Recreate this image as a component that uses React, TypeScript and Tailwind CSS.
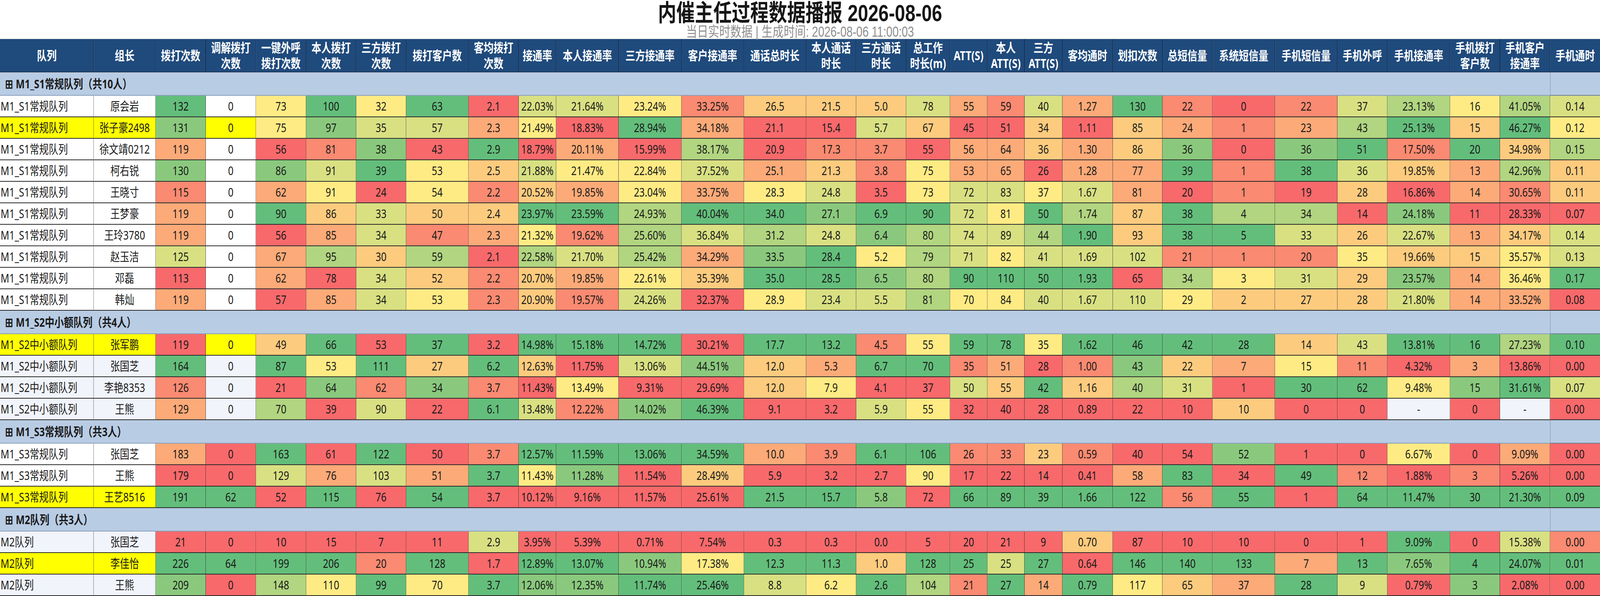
import React, { useState } from "react";

type Row = { q: string; n: string; v: string; c: string; hl?: boolean };
type Group = { label: string; tint: boolean; rows: Row[] };

const colWidths = [
  "w-[305px]", "w-[201px]", "w-[163px]", "w-[163px]", "w-[163px]", "w-[163px]", "w-[162px]",
  "w-[203px]", "w-[163px]", "w-[122px]", "w-[203px]", "w-[204px]", "w-[203px]", "w-[202px]",
  "w-[163px]", "w-[162px]", "w-[143px]", "w-[121px]", "w-[121px]", "w-[123px]", "w-[164px]",
  "w-[161px]", "w-[163px]", "w-[203px]", "w-[203px]", "w-[162px]", "w-[204px]", "w-[162px]",
  "w-[163px]", "w-[162px]",
];

const headers = [
  "队列", "组长", "拨打次数", "调解拨打|次数", "一键外呼|拨打次数", "本人拨打|次数", "三方拨打|次数",
  "拨打客户数", "客均拨打|次数", "接通率", "本人接通率", "三方接通率", "客户接通率", "通话总时长",
  "本人通话|时长", "三方通话|时长", "总工作|时长(m)", "ATT(S)", "本人|ATT(S)", "三方|ATT(S)",
  "客均通时", "划扣次数", "总短信量", "系统短信量", "手机短信量", "手机外呼", "手机接通率",
  "手机拨打|客户数", "手机客户|接通率", "手机通时",
];

const groups: Group[] = [
  {
    label: "M1_S1常规队列（共10人）",
    tint: false,
    rows: [
      { q: "M1_S1常规队列", n: "原会岩", v: "132 0 73 100 32 63 2.1 22.03% 21.64% 23.24% 33.25% 26.5 21.5 5.0 78 55 59 40 1.27 130 22 0 22 37 23.13% 16 41.05% 0.14", c: "8 W 4 8 4 8 0 5 5 4 1 3 3 3 5 2 1 5 2 8 1 0 1 5 6 4 6 5" },
      { q: "M1_S1常规队列", n: "张子豪2498", hl: true, v: "131 0 75 97 35 57 2.3 21.49% 18.83% 28.94% 34.18% 21.1 15.4 5.7 67 45 51 34 1.11 85 24 1 23 43 25.13% 15 46.27% 0.12", c: "7 X 4 7 5 5 2 4 0 8 2 0 0 5 3 0 0 3 0 3 2 1 2 6 8 3 8 4" },
      { q: "M1_S1常规队列", n: "徐文靖0212", v: "119 0 56 81 38 43 2.9 18.79% 20.11% 15.99% 38.17% 20.9 17.3 3.7 55 56 64 36 1.30 86 36 0 36 51 17.50% 20 34.98% 0.15", c: "2 W 0 1 7 0 8 0 2 0 6 0 1 1 0 2 2 3 2 3 7 0 7 8 1 8 3 6" },
      { q: "M1_S1常规队列", n: "柯右锐", v: "130 0 86 91 39 53 2.5 21.88% 21.47% 22.84% 37.52% 25.1 21.3 3.8 75 53 65 26 1.28 77 39 1 38 36 19.85% 13 42.96% 0.11", c: "7 W 7 5 8 4 3 5 4 4 5 2 3 1 4 2 2 0 2 2 8 1 8 5 3 2 6 3" },
      { q: "M1_S1常规队列", n: "王晓寸", v: "115 0 62 91 24 54 2.2 20.52% 19.85% 23.04% 33.75% 28.3 24.8 3.5 73 72 83 37 1.67 81 20 1 19 28 16.86% 14 30.65% 0.11", c: "1 W 2 4 0 4 1 3 2 4 2 4 5 0 4 5 5 4 5 2 0 1 0 3 0 2 1 3" },
      { q: "M1_S1常规队列", n: "王梦豪", v: "119 0 90 86 33 50 2.4 23.97% 23.59% 24.93% 40.04% 34.0 27.1 6.9 90 72 81 50 1.74 87 38 4 34 14 24.18% 11 28.33% 0.07", c: "2 W 8 3 5 3 3 8 8 6 8 8 7 8 8 5 4 8 6 3 8 6 6 0 7 0 0 0" },
      { q: "M1_S1常规队列", n: "王玲3780", v: "119 0 56 85 34 47 2.3 21.32% 19.62% 25.60% 36.84% 31.2 24.8 6.4 80 74 89 44 1.90 93 38 5 33 26 22.67% 13 34.17% 0.14", c: "2 W 0 2 5 1 2 4 1 6 5 6 5 7 6 5 5 6 8 3 8 8 5 3 5 2 3 5" },
      { q: "M1_S1常规队列", n: "赵玉洁", v: "125 0 67 95 30 59 2.1 22.58% 21.70% 25.42% 34.29% 33.5 28.4 5.2 79 71 82 41 1.69 102 21 1 20 35 19.66% 15 35.57% 0.13", c: "5 W 2 6 3 6 0 6 5 6 2 7 8 4 6 5 4 5 5 5 1 1 1 4 3 3 4 5" },
      { q: "M1_S1常规队列", n: "邓磊", v: "113 0 62 78 34 52 2.2 20.70% 19.85% 22.61% 35.39% 35.0 28.5 6.5 80 90 110 50 1.93 65 34 3 31 29 23.57% 14 36.46% 0.17", c: "0 W 2 0 5 3 1 3 2 4 3 8 8 7 6 8 8 8 8 0 6 4 5 3 7 2 4 8" },
      { q: "M1_S1常规队列", n: "韩灿", v: "119 0 57 85 34 53 2.3 20.90% 19.57% 24.26% 32.37% 28.9 23.4 5.5 81 70 84 40 1.67 110 29 2 27 28 21.80% 14 33.52% 0.08", c: "2 W 0 2 5 4 1 3 1 5 0 4 5 5 6 4 4 5 5 5 4 3 3 3 5 2 2 0" },
    ],
  },
  {
    label: "M1_S2中小额队列（共4人）",
    tint: true,
    rows: [
      { q: "M1_S2中小额队列", n: "张军鹏", hl: true, v: "119 0 49 66 53 37 3.2 14.98% 15.18% 14.72% 30.21% 17.7 13.2 4.5 55 59 78 35 1.62 46 42 28 14 43 13.81% 16 27.23% 0.10", c: "0 X 3 8 0 8 0 8 8 8 0 8 8 1 4 8 8 4 8 8 8 8 3 5 8 8 6 8" },
      { q: "M1_S2中小额队列", n: "张国芝", v: "164 0 87 53 111 27 6.2 12.63% 11.75% 13.06% 44.51% 12.0 5.3 6.7 70 35 51 28 1.00 43 22 7 15 11 4.32% 3 13.86% 0.00", c: "8 W 8 4 8 3 8 3 0 5 7 3 2 8 8 1 2 0 1 7 3 2 4 1 0 2 0 0" },
      { q: "M1_S2中小额队列", n: "李艳8353", v: "126 0 21 64 62 34 3.7 11.43% 13.49% 9.31% 29.69% 12.0 7.9 4.1 37 50 55 42 1.16 40 31 1 30 62 9.48% 15 31.61% 0.07", c: "1 W 0 7 1 7 1 0 4 0 0 3 4 0 0 5 3 8 3 6 5 0 8 8 4 7 8 5" },
      { q: "M1_S2中小额队列", n: "王熊", v: "129 0 70 39 90 22 6.1 13.48% 12.22% 14.02% 46.39% 9.1 3.2 5.9 55 32 40 28 0.89 22 10 10 0 0 - 0 - 0.00", c: "2 W 6 0 5 0 8 5 1 7 8 0 0 5 4 0 0 0 0 0 0 3 0 0 W 0 W 0" },
    ],
  },
  {
    label: "M1_S3常规队列（共3人）",
    tint: false,
    rows: [
      { q: "M1_S3常规队列", n: "张国芝", v: "183 0 163 61 122 50 3.7 12.57% 11.59% 13.06% 34.59% 10.0 3.9 6.1 106 26 33 23 0.59 40 54 52 1 0 6.67% 0 9.09% 0.00", c: "2 0 8 0 8 0 1 8 8 8 8 2 1 8 8 1 1 3 1 0 0 7 0 0 4 0 2 0" },
      { q: "M1_S3常规队列", n: "王熊", v: "179 0 129 76 103 51 3.7 11.43% 11.28% 11.54% 28.49% 5.9 3.2 2.7 90 17 22 14 0.41 58 83 34 49 12 1.88% 3 5.26% 0.00", c: "0 0 5 2 5 2 8 4 7 0 3 0 0 0 4 0 0 0 0 2 8 0 8 1 0 1 0 0" },
      { q: "M1_S3常规队列", n: "王艺8516", hl: true, v: "191 62 52 115 76 54 3.7 10.12% 9.16% 11.57% 25.61% 21.5 15.7 5.8 72 66 89 39 1.66 122 56 55 1 64 11.47% 30 21.30% 0.09", c: "8 8 0 8 0 8 0 0 0 0 0 8 8 7 0 8 8 8 8 8 1 8 0 8 8 8 8 8" },
    ],
  },
  {
    label: "M2队列（共3人）",
    tint: true,
    rows: [
      { q: "M2队列", n: "张国芝", v: "21 0 10 15 7 11 2.9 3.95% 5.39% 0.71% 7.54% 0.3 0.3 0.0 5 20 21 9 0.70 87 10 10 0 1 9.09% 0 15.38% 0.00", c: "0 0 0 0 0 0 5 0 0 0 0 0 0 0 0 0 0 0 3 0 0 0 0 0 8 0 5 1" },
      { q: "M2队列", n: "李佳怡", hl: true, v: "226 64 199 206 20 128 1.7 12.89% 13.07% 10.94% 17.38% 12.3 11.3 1.0 128 25 25 27 0.64 146 140 133 7 13 7.65% 4 24.07% 0.01", c: "8 8 8 8 1 8 0 8 8 7 4 8 8 3 8 8 5 8 0 8 8 8 2 8 7 8 8 8" },
      { q: "M2队列", n: "王熊", v: "209 0 148 110 99 70 3.7 12.06% 12.35% 11.74% 25.46% 8.8 6.2 2.6 104 21 27 14 0.79 117 65 37 28 9 0.79% 3 2.08% 0.00", c: "7 0 6 4 8 4 8 7 7 8 8 5 4 8 6 1 8 2 8 4 3 2 8 5 0 7 0 0" },
    ],
  },
];

const RED = [248, 105, 107];
const YEL = [255, 235, 132];
const GRN = [99, 190, 123];

// excel-like 3 colour scale, level 0..8
function heat(level: number) {
  const t = level / 8;
  const [a, b, s] = t <= 0.5 ? [RED, YEL, t * 2] : [YEL, GRN, (t - 0.5) * 2];
  const mix = (i: number) => Math.round(a[i] + (b[i] - a[i]) * s);
  return `rgb(${mix(0)}, ${mix(1)}, ${mix(2)})`;
}

function cellBg(code: string, rowBg: string) {
  if (code === "W") return rowBg;
  if (code === "X") return "#ffff00";
  return heat(Number(code));
}

function DataRow({ row, tint }: { row: Row; tint: boolean }) {
  const rowBg = tint ? "#f1f4fb" : "#ffffff";
  const values = row.v.split(" ");
  const colors = row.c.split(" ");
  const lead = row.hl ? "#ffff00" : rowBg;
  return (
    <tr className="h-[55px]">
      <td
        className="border-r border-b-2 border-[#2a2a2a] pl-[2px] text-left whitespace-nowrap"
        style={{ backgroundColor: lead }}
      >
        {row.q}
      </td>
      <td
        className="border-r border-b-2 border-[#2a2a2a] text-center whitespace-nowrap"
        style={{ backgroundColor: lead }}
      >
        {row.n}
      </td>
      {values.map((val, i) => (
        <td
          key={i}
          className={`border-b-2 border-[#2a2a2a] text-center whitespace-nowrap ${
            i === values.length - 1 ? "" : "border-r"
          }`}
          style={{ backgroundColor: cellBg(colors[i], rowBg) }}
        >
          {val}
        </td>
      ))}
    </tr>
  );
}

const SHEET_WIDTH = 5200;

export default function App() {
  // the report is laid out for a 5200px wide wall screen; squeeze it into narrower windows
  const [fit] = useState(() =>
    typeof window === "undefined" ? 1 : Math.min(1, window.innerWidth / SHEET_WIDTH)
  );

  return (
    <div className="w-full h-[1525px] overflow-hidden bg-white">
      <div
        className="w-[5200px] h-[1525px] origin-top-left text-[#1a1a1a] font-['Noto_Sans','Noto_Sans_CJK_SC',sans-serif]"
        style={{ transform: `scale(${fit}, 1)` }}
      >
        {/* Title */}
        <div className="h-[99px] flex flex-col items-center font-['Liberation_Sans','Noto_Sans_CJK_SC',sans-serif]">
          <h1 className="text-[60px] leading-[67px] font-bold text-[#161616]">
            内催主任过程数据播报 2026-08-06
          </h1>
          <div className="text-[36px] leading-[30px] text-[#8f8f8f]">
            当日实时数据 | 生成时间: 2026-08-06 11:00:03
          </div>
        </div>

        <table className="w-[5200px] table-fixed border-separate border-spacing-0 border-t border-[#c9c9c9] text-[31px]">
          <colgroup>
            {colWidths.map((w, i) => (
              <col key={i} className={w} />
            ))}
          </colgroup>
          <thead>
            <tr className="h-[85px]">
              {headers.map((h, i) => (
                <th
                  key={i}
                  className={`bg-[#1f4a7c] text-white font-bold text-[32px] leading-[40px] text-center align-middle border-b border-[#111] whitespace-nowrap ${
                    i === headers.length - 1 ? "" : "border-r"
                  }`}
                >
                  {h.split("|").map((line, j) => (
                    <div key={j}>{line}</div>
                  ))}
                </th>
              ))}
            </tr>
          </thead>
          <tbody>
            {groups.map((g) => (
              <React.Fragment key={g.label}>
                <tr className="h-[60px]">
                  <td
                    colSpan={29}
                    className="bg-[#b8cce4] border-b-2 border-[#8a9fbb] pl-[17px] text-left font-bold whitespace-nowrap"
                  >
                    ⊞ {g.label}
                  </td>
                  <td className="bg-[#b8cce4] border-l border-b-2 border-[#6f7f96]" />
                </tr>
                {g.rows.map((r, i) => (
                  <DataRow key={i} row={r} tint={g.tint} />
                ))}
              </React.Fragment>
            ))}
          </tbody>
        </table>
      </div>
    </div>
  );
}
